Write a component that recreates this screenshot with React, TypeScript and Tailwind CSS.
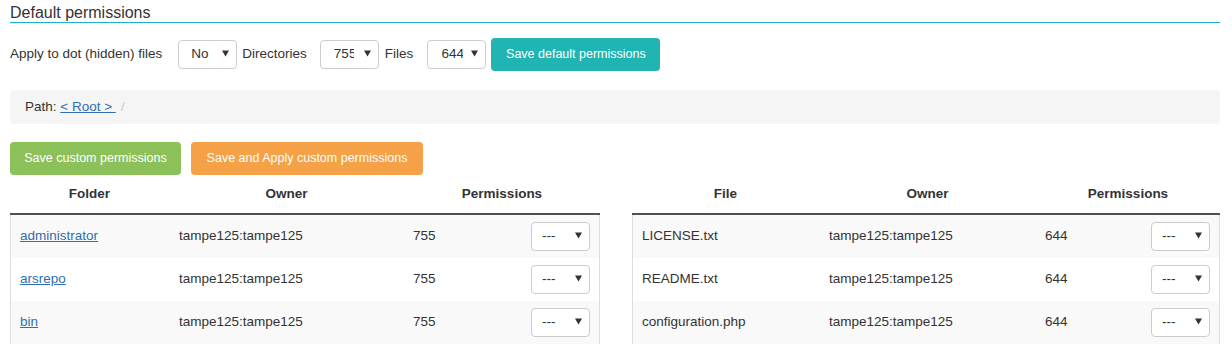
import React from 'react';

type Row = { name: string; owner: string; perms: string; link?: boolean };

const folders: Row[] = [
  { name: 'administrator', owner: 'tampe125:tampe125', perms: '755', link: true },
  { name: 'arsrepo', owner: 'tampe125:tampe125', perms: '755', link: true },
  { name: 'bin', owner: 'tampe125:tampe125', perms: '755', link: true },
];

const files: Row[] = [
  { name: 'LICENSE.txt', owner: 'tampe125:tampe125', perms: '644' },
  { name: 'README.txt', owner: 'tampe125:tampe125', perms: '644' },
  { name: 'configuration.php', owner: 'tampe125:tampe125', perms: '644' },
];

const Caret = () => (
  <svg width="7" height="7" viewBox="0 0 7 7" className="shrink-0">
    <path d="M0 0.5h7L3.5 6.5z" fill="#333" />
  </svg>
);

// looks like a native select, drawn by hand so it renders the same everywhere
const FakeSelect: React.FC<{ value: string; textWidth: string; padLeft: string }> = ({ value, textWidth, padLeft }) => (
  <div className={`flex h-[29px] w-[59px] items-center rounded-[4px] border border-[#cccccc] bg-white pr-[7px] ${padLeft}`}>
    <span className={`overflow-hidden whitespace-nowrap ${textWidth}`}>{value}</span>
    <span className="ml-auto -mt-[3px] flex">
      <Caret />
    </span>
  </div>
);

const PermTable: React.FC<{ title: string; rows: Row[]; cols: string; width: string }> = ({ title, rows, cols, width }) => (
  <div className={width}>
    <div className={`grid ${cols} h-[40px] items-center border-b-2 border-[#505050] font-bold text-[#333]`}>
      <div className="text-center">{title}</div>
      <div className="text-center">Owner</div>
      <div className="text-center">Permissions</div>
    </div>
    {rows.map((r, i) => (
      <div
        key={r.name}
        className={`grid ${cols} h-[43px] items-center border-x border-[#dddddd] ${i % 2 === 0 ? 'bg-[#f9f9f9]' : 'bg-white'}`}
      >
        <div className="pl-[9px]">
          {r.link ? <a href="#" className="text-[#2f6fad] underline">{r.name}</a> : r.name}
        </div>
        <div className="pl-[9px]">{r.owner}</div>
        <div className="flex items-center justify-between pl-[8px] pr-[9px]">
          <span>{r.perms}</span>
          <FakeSelect value="---" textWidth="w-[30px]" padLeft="pl-[10px]" />
        </div>
      </div>
    ))}
  </div>
);

export default function App() {
  return (
    <div className="w-[1232px] bg-white px-[10px] font-['Liberation_Sans',Arial,sans-serif] text-[13.5px] text-[#333]">
      <div className="w-[1210px]">
        <h2 className="border-b border-[#1cb4c0] pt-[4px] text-[16px] leading-[18px] font-normal">Default permissions</h2>

        <div className="mt-[15px] flex h-[33px] items-center">
          <span className="mr-[16px]">Apply to dot (hidden) files</span>
          <FakeSelect value="No" textWidth="w-[24px]" padLeft="pl-[12px]" />
          <span className="ml-[5px] mr-[13px]">Directories</span>
          <FakeSelect value="755" textWidth="w-[20px]" padLeft="pl-[13px]" />
          <span className="ml-[6px] mr-[14px]">Files</span>
          <FakeSelect value="644" textWidth="w-[22px]" padLeft="pl-[13px]" />
          <button className="ml-[5px] h-[33px] w-[169px] rounded-[4px] bg-[#20b4b2] text-[12.5px] text-white">
            Save default permissions
          </button>
        </div>

        <div className="mt-[19px] flex h-[34px] items-center rounded-[4px] bg-[#f5f5f5] pl-[15px]">
          <span>Path:&nbsp;</span>
          <a href="#" className="text-[#2f6fad] underline">&lt; Root &gt;&nbsp;</a>
          <span className="ml-[5px] text-[#cccccc]">/</span>
        </div>

        <div className="mt-[18px] flex gap-[10px]">
          <button className="h-[33px] w-[171px] rounded-[4px] bg-[#8cc15a] text-[12.5px] text-white">
            Save custom permissions
          </button>
          <button className="h-[33px] w-[232px] rounded-[4px] bg-[#f4a148] text-[12.5px] text-white">
            Save and Apply custom permissions
          </button>
        </div>

        <div className="flex justify-between">
          <PermTable title="Folder" rows={folders} cols="grid-cols-[159px_235px_1fr]" width="w-[590px]" />
          <PermTable title="File" rows={files} cols="grid-cols-[187px_217px_1fr]" width="w-[588px]" />
        </div>
      </div>
    </div>
  );
}
